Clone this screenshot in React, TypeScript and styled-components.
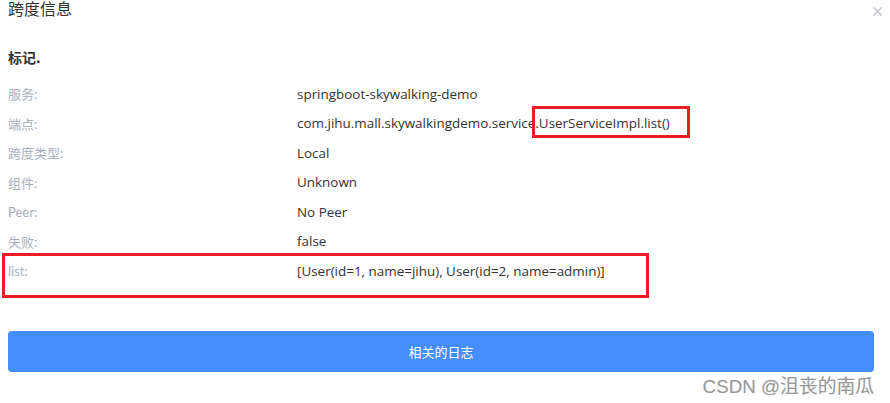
import * as React from 'react';
import styled, { createGlobalStyle } from 'styled-components';

interface Tag {
  label: string;
  value: React.ReactNode;
  marked?: boolean;
}

const GlobalStyle = createGlobalStyle`
  html, body {
    margin: 0;
    padding: 0;
    background: #fff;
  }
  body {
    font-family: "Open Sans", "Noto Sans CJK SC", sans-serif;
    width: 890px;
    height: 403px;
    overflow: hidden;
  }
`;

const App = () => {
  const tags: Tag[] = [
    { label: '服务:', value: 'springboot-skywalking-demo' },
    {
      label: '端点:',
      value: <>com.jihu.mall.skywalkingdemo.service<Highlight>.UserServiceImpl.list()</Highlight></>,
    },
    { label: '跨度类型:', value: 'Local' },
    { label: '组件:', value: 'Unknown' },
    { label: 'Peer:', value: 'No Peer' },
    { label: '失败:', value: 'false' },
    { label: 'list:', value: '[User(id=1, name=jihu), User(id=2, name=admin)]', marked: true },
  ];

  return <Page>
    <GlobalStyle/>
    <Header>
      <Title>跨度信息</Title>
      <Close viewBox="0 0 12 12">
        <path d="M1.5 1.5 L10.5 10.5 M10.5 1.5 L1.5 10.5" stroke="#c8ccd2" strokeWidth="1.6"/>
      </Close>
    </Header>
    <SectionTitle>标记.</SectionTitle>
    <TagList>
      {tags.map((tag) => {
        return <Row key={tag.label} marked={!!tag.marked}>
          <Label>{tag.label}</Label>
          <Value>{tag.value}</Value>
        </Row>;
      })}
    </TagList>
    <LogButton>相关的日志</LogButton>
    <Watermark>CSDN @沮丧的南瓜</Watermark>
  </Page>;
};

const Page = styled.div`
  padding: 0 16px 0 8px;
  display: flex;
  flex-direction: column;
`;

const Header = styled.div`
  display: flex;
  align-items: center;
  justify-content: space-between;
  height: 17px;
`;

const Title = styled.div`
  font-family: "Noto Sans CJK SC", sans-serif;
  font-size: 16px;
  line-height: 17px;
  color: #303133;
`;

const Close = styled.svg`
  width: 11px;
  height: 11px;
  margin-top: 5px;
  margin-right: -9px;
`;

const SectionTitle = styled.div`
  font-family: "Noto Sans CJK SC", sans-serif;
  font-weight: bold;
  font-size: 14px;
  line-height: 20px;
  color: #333;
  margin-top: 30px;
  margin-bottom: 12px;
`;

const TagList = styled.div`
  display: flex;
  flex-direction: column;
`;

const Row = styled.div<{ marked: boolean }>`
  position: relative;
  display: grid;
  grid-template-columns: 289px 1fr;
  height: 29.5px;
  align-items: center;
  font-size: 13px;
  &::after {
    content: '';
    display: ${({ marked }) => marked ? 'block' : 'none'};
    position: absolute;
    left: -6px;
    top: -3px;
    width: 647px;
    height: 45px;
    box-sizing: border-box;
    border: 3px solid #ea1c24;
  }
`;

const Label = styled.div`
  font-family: Lato, "Noto Sans CJK SC", sans-serif;
  color: #a9b0bc;
`;

const Value = styled.div`
  font-size: 13.45px;
  color: #333;
  white-space: nowrap;
`;

const Highlight = styled.span`
  position: relative;
  &::after {
    content: '';
    position: absolute;
    left: -3px;
    right: -20px;
    top: -8px;
    bottom: -6px;
    border: 3px solid #ea1c24;
  }
`;

const LogButton = styled.div`
  margin-top: 45px;
  height: 41px;
  border-radius: 4px;
  background: #448dfe;
  color: #fff;
  font-family: "Noto Sans CJK SC", sans-serif;
  font-size: 13px;
  display: flex;
  align-items: center;
  justify-content: center;
`;

const Watermark = styled.div`
  align-self: flex-end;
  margin-top: -1px;
  font-family: "Liberation Sans", "Noto Sans CJK SC", sans-serif;
  font-size: 18.8px;
  color: #9a9a9a;
  text-shadow: 0 0 1px #ddd;
`;

export default App;
